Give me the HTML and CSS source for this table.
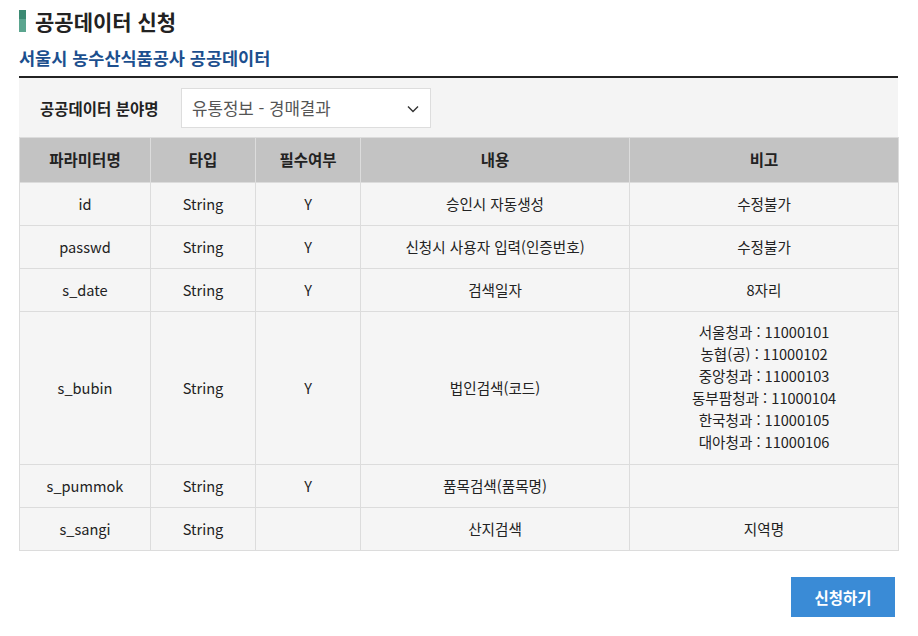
FILE: index.html
```html
<!DOCTYPE html>
<html lang="ko">
<head>
<meta charset="utf-8">
<link rel="stylesheet" href="styles.css">
</head>
<body>
<div class="page">
  <h1 class="title"><span class="mark"></span>공공데이터 신청</h1>
  <h2 class="subtitle">서울시 농수산식품공사 공공데이터</h2>
  <div class="filter">
    <span class="filter-label">공공데이터 분야명</span>
    <div class="select">
      <span>유통정보 - 경매결과</span>
      <svg class="chev" width="12" height="8" viewBox="0 0 12 8"><path d="M1 1.5 L6 6.5 L11 1.5" fill="none" stroke="#333" stroke-width="1.4"/></svg>
    </div>
  </div>
  <table class="grid">
    <colgroup>
      <col class="c1"><col class="c2"><col class="c3"><col class="c4"><col class="c5">
    </colgroup>
    <thead>
      <tr><th>파라미터명</th><th>타입</th><th>필수여부</th><th>내용</th><th>비고</th></tr>
    </thead>
    <tbody>
      <tr><td>id</td><td>String</td><td>Y</td><td>승인시 자동생성</td><td>수정불가</td></tr>
      <tr><td>passwd</td><td>String</td><td>Y</td><td>신청시 사용자 입력(인증번호)</td><td>수정불가</td></tr>
      <tr><td>s_date</td><td>String</td><td>Y</td><td>검색일자</td><td>8자리</td></tr>
      <tr class="multi"><td>s_bubin</td><td>String</td><td>Y</td><td>법인검색(코드)</td><td class="lines">서울청과 : 11000101<br>농협(공) : 11000102<br>중앙청과 : 11000103<br>동부팜청과 : 11000104<br>한국청과 : 11000105<br>대아청과 : 11000106</td></tr>
      <tr><td>s_pummok</td><td>String</td><td>Y</td><td>품목검색(품목명)</td><td></td></tr>
      <tr><td>s_sangi</td><td>String</td><td></td><td>산지검색</td><td>지역명</td></tr>
    </tbody>
  </table>
  <div class="actions">
    <button class="btn">신청하기</button>
  </div>
</div>
</body>
</html>
```
FILE: styles.css
```css
* { box-sizing: border-box; }
body {
  margin: 0;
  background: #fff;
  font-family: "Noto Sans CJK KR", "Noto Sans", sans-serif;
  color: #222;
}
.page {
  width: 898px;
  padding-left: 19px;
}
.title {
  margin: 0;
  padding-top: 4px;
  height: 38px;
  display: flex;
  align-items: center;
  gap: 9px;
  font-size: 21px;
  font-weight: 700;
  color: #222;
  line-height: 28px;
}
.title-text { margin-top: -2px; }
.mark {
  width: 7px;
  height: 22px;
  background: linear-gradient(#3c8a73 0 9px, #5ba58f 9px);
}
.subtitle {
  margin: 0;
  height: 40px;
  padding-top: 7px;
  font-size: 17.5px;
  font-weight: 700;
  color: #1c4f8e;
  line-height: 26px;
  border-bottom: 2px solid #222;
}
.filter {
  height: 59px;
  background: #f4f4f4;
  display: flex;
  align-items: center;
  padding-left: 21px;
  padding-top: 1px;
}
.filter-label {
  width: 141px;
  font-size: 15.5px;
  font-weight: 700;
  color: #222;
}
.select {
  width: 250px;
  height: 40px;
  background: #fff;
  border: 1px solid #ddd;
  display: flex;
  align-items: center;
  justify-content: space-between;
  padding: 0 11px 0 10px;
  font-size: 16.8px;
  color: #555;
}
.chev { margin-top: 1px; }
.grid {
  width: 879px;
  border-collapse: collapse;
  table-layout: fixed;
  font-size: 14.6px;
  color: #222;
}
.c1 { width: 131px; }
.c2 { width: 105px; }
.c3 { width: 105px; }
.c4 { width: 269px; }
.c5 { width: 269px; }
.grid th, .grid td {
  border: 1px solid #dcdcdc;
  text-align: center;
  padding: 0 0 2px;
}
.grid th {
  height: 45px;
  background: #c3c3c3;
  font-size: 15.5px;
  font-weight: 700;
  color: #222;
}
.grid td {
  height: 43px;
  background: #f5f5f5;
}
.grid tr.multi td { height: 153px; }
.grid td.lines { line-height: 22px; padding: 0 0 2px; }
.actions {
  display: flex;
  justify-content: flex-end;
  padding-top: 26px;
  padding-right: 3px;
}
.btn {
  width: 104px;
  height: 40px;
  border: 0;
  background: #3a8bd6;
  color: #fff;
  font-family: "Noto Sans CJK KR", "Noto Sans", sans-serif;
  font-size: 15.5px;
  font-weight: 700;
  padding-bottom: 2px;
}
```
